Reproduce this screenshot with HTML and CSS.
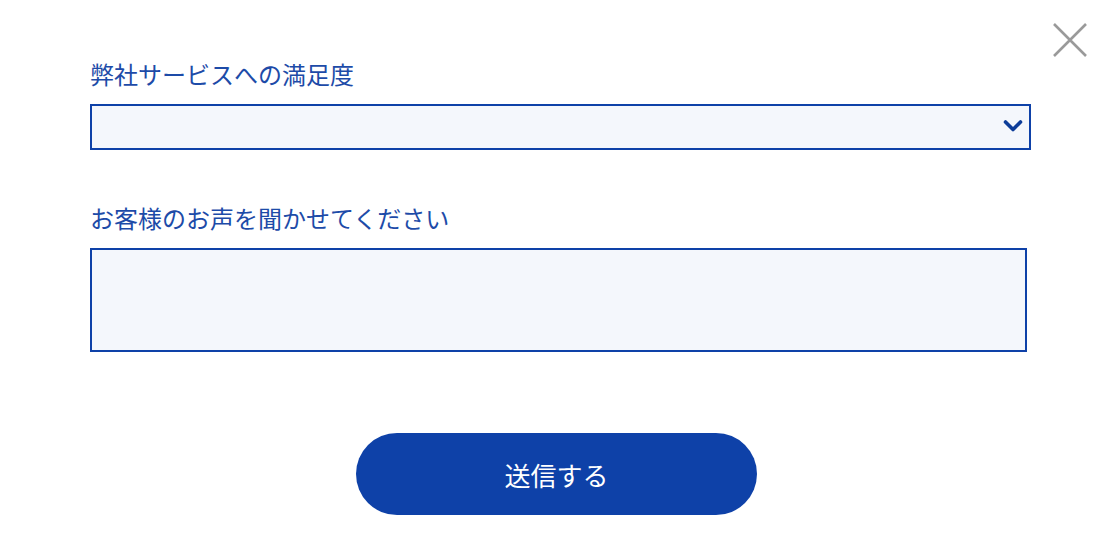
FILE: index.html
```html
<!DOCTYPE html>
<html lang="ja">
<head>
  <meta charset="UTF-8">
  <meta name="viewport" content="width=device-width, initial-scale=1.0">
  <title>アンケート</title>
  <link rel="stylesheet" href="styles.css">
</head>
<body>

<div class="modal">
  <button class="close" type="button" aria-label="閉じる">
    <svg width="36" height="36" viewBox="0 0 36 36">
      <path d="M2 2 L34 34 M34 2 L2 34" stroke="#9a9a9a" stroke-width="2.6" fill="none"/>
    </svg>
  </button>

  <form id="surveyForm" class="survey">
    <label for="rating">弊社サービスへの満足度</label>
    <div class="select-wrap">
      <select id="rating" name="rating">
        <option value=""></option>
        <option value="5">とても満足</option>
        <option value="4">満足</option>
        <option value="3">普通</option>
        <option value="2">不満</option>
        <option value="1">とても不満</option>
      </select>
      <svg class="chevron" width="20" height="14" viewBox="0 0 20 14">
        <path d="M2.5 3 L10 10.5 L17.5 3" stroke="#0d3d99" stroke-width="3.6" fill="none" stroke-linecap="round" stroke-linejoin="round"/>
      </svg>
    </div>

    <label for="comment" class="second">お客様のお声を聞かせてください</label>
    <textarea id="comment" name="comment"></textarea>

    <div class="actions">
      <input type="submit" value="送信する">
    </div>
  </form>
</div>

</body>
</html>
```

FILE: styles.css
```css
body {
  margin: 0;
  background: #fff;
  font-family: "Noto Sans CJK JP", "Noto Sans", sans-serif;
}
.modal {
  position: relative;
  width: 1112px;
  height: 541px;
}
.close {
  position: absolute;
  top: 22px;
  right: 24px;
  padding: 0;
  border: none;
  background: none;
  cursor: pointer;
}
.close svg {
  display: block;
}
.survey {
  padding: 56px 0 0 90px;
}
label {
  display: block;
  font-size: 24px;
  line-height: 36px;
  color: #1d4ba8;
  margin-bottom: 12px;
}
label.second {
  margin-top: 50px;
}
.select-wrap {
  position: relative;
  width: 941px;
}
select {
  display: block;
  width: 100%;
  height: 46px;
  border: 2px solid #0e41a8;
  border-radius: 0;
  background: #f4f7fc;
  appearance: none;
  -webkit-appearance: none;
  font-size: 18px;
  color: #1d4ba8;
  padding: 0 40px 0 10px;
}
.chevron {
  position: absolute;
  right: 8px;
  top: 15px;
  pointer-events: none;
}
textarea {
  display: block;
  box-sizing: border-box;
  width: 937px;
  height: 104px;
  border: 2px solid #0e41a8;
  background: #f4f7fc;
  resize: none;
  font-size: 18px;
}
.actions {
  width: 933px;
  display: flex;
  justify-content: center;
  margin-top: 81px;
}
input[type="submit"] {
  width: 401px;
  height: 82px;
  border: none;
  border-radius: 41px;
  background-color: #0e41a8;
  color: #fff;
  font-family: "Noto Sans CJK JP", sans-serif;
  font-size: 26px;
  cursor: pointer;
}
input[type="submit"]:hover {
  background-color: #0b3590;
}
```
